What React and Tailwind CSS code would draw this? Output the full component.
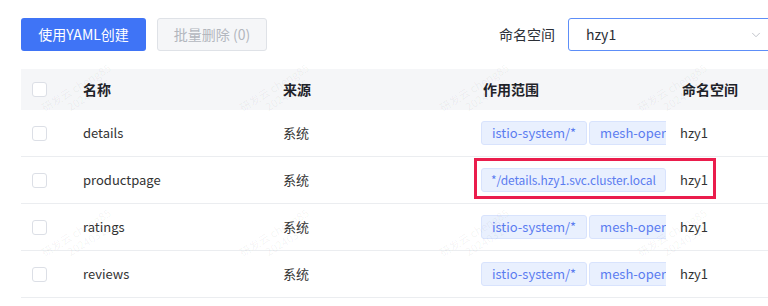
import { ChevronDown } from "lucide-react";

const rows = [
  { name: "details", source: "系统", scopes: ["istio-system/*", "mesh-operator/*"], ns: "hzy1" },
  { name: "productpage", source: "系统", scopes: ["*/details.hzy1.svc.cluster.local"], ns: "hzy1", marked: true },
  { name: "ratings", source: "系统", scopes: ["istio-system/*", "mesh-operator/*"], ns: "hzy1" },
  { name: "reviews", source: "系统", scopes: ["istio-system/*", "mesh-operator/*"], ns: "hzy1" },
];

const marks = [
  { x: 40, y: 80 },
  { x: 238, y: 80 },
  { x: 438, y: 80 },
  { x: 636, y: 80 },
  { x: 40, y: 225 },
  { x: 238, y: 225 },
  { x: 438, y: 225 },
  { x: 636, y: 225 },
];

const Box = () => (
  <span className="block w-[15px] h-[15px] rounded-[3px] border border-[#dcdfe6] bg-white" />
);

const App = () => {
  return (
    <div
      className="relative w-[768px] h-[306px] overflow-hidden bg-white pl-[21px] pt-[18px] text-[#2b2f36]"
      style={{ fontFamily: '"Noto Sans CJK SC", sans-serif' }}
    >
      {/* toolbar */}
      <div className="flex items-center h-[33px]">
        <button className="w-[125px] h-[33px] rounded-[3px] bg-[#3f74f6] text-white text-[14px]">
          使用YAML创建
        </button>
        <button className="ml-[11px] w-[110px] h-[33px] rounded-[3px] border border-[#dfe2e7] bg-[#f5f6f8] text-[#b3b7be] text-[14px]">
          批量删除 (0)
        </button>
        <span className="ml-auto text-[14px] text-[#2b2f36]">命名空间</span>
        <div className="ml-[13px] w-[230px] h-[33px] shrink-0 rounded-[3px] border border-[#5d8ef8] flex items-center pl-[17px] pr-[12px] -mr-[30px]">
          <span className="text-[14px] text-[#2b2f36]">hzy1</span>
          <ChevronDown className="ml-auto mr-[22px] text-[#b8bcc4]" size={14} strokeWidth={1.5} />
        </div>
      </div>

      {/* table */}
      <div className="mt-[18px] w-[800px]">
        <div className="flex items-center h-[41px] bg-[#f5f6f8] text-[14px] font-bold text-[#1f2329]">
          <div className="w-[50px] pl-[11px]">
            <Box />
          </div>
          <div className="w-[200px] pl-[12px]">名称</div>
          <div className="w-[200px] pl-[12px]">来源</div>
          <div className="w-[195px] pl-[12px]">作用范围</div>
          <div className="pl-[16px]">命名空间</div>
        </div>
        {rows.map((r) => (
          <div
            key={r.name}
            className="relative flex items-center h-[47px] border-b border-[#ebedf0] text-[13px] text-[#333]"
          >
            <div className="w-[50px] pl-[11px]">
              <Box />
            </div>
            <div className="w-[200px] pl-[12px]">{r.name}</div>
            <div className="w-[200px] pl-[12px]">{r.source}</div>
            <div className="w-[195px] pl-[10px] flex gap-[2px] overflow-hidden">
              {r.scopes.map((s) => (
                <span
                  key={s}
                  className={
                    r.marked
                      ? "shrink-0 h-[24px] px-[9px] flex items-center rounded-[3px] border border-[#d8e3fd] bg-[#e9f0fe] text-[#5b7cf0] whitespace-nowrap text-[12px] tracking-[-0.1px]"
                      : "shrink-0 h-[24px] px-[10px] flex items-center rounded-[3px] border border-[#d8e3fd] bg-[#e9f0fe] text-[#5b7cf0] whitespace-nowrap"
                  }
                >
                  {s}
                </span>
              ))}
            </div>
            <div className="pl-[14px]">{r.ns}</div>
            {r.marked && (
              <div className="absolute left-[453px] top-[1px] w-[242px] h-[41px] border-[3px] border-[#ea1d4c]" />
            )}
          </div>
        ))}
      </div>

      {/* watermark */}
      {marks.map((m, i) => (
        <div
          key={i}
          className="pointer-events-none absolute text-[11px] leading-[13px] text-black/[0.05] -rotate-[32deg] whitespace-nowrap"
          style={{ left: m.x, top: m.y }}
        >
          <div>研发云 cheng85</div>
          <div className="pl-[22px]">20240315</div>
        </div>
      ))}
    </div>
  );
};

export default App;
